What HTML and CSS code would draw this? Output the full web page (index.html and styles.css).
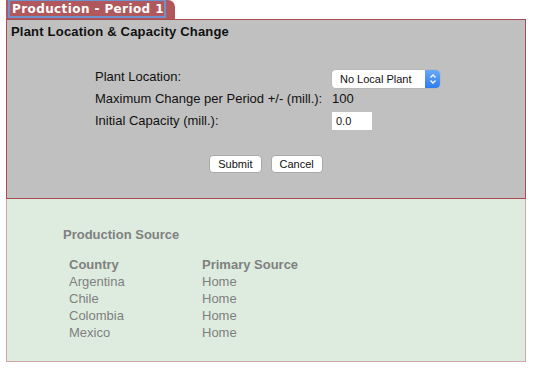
FILE: index.html
```html
<!DOCTYPE html>
<html lang="en">
<head>
    <meta charset="UTF-8">
    <title>Production - Period 1</title>
    <link rel="stylesheet" href="styles.css">
</head>
<body>
    <div class="tabs">
        <div class="tab"><span class="tab-label">Production - Period 1</span></div>
    </div>

    <div class="change-panel">
        <h2>Plant Location &amp; Capacity Change</h2>
        <div class="change-form">
            <label>Plant Location:</label>
            <div class="select">
                <span class="select-text">No Local Plant</span>
                <span class="stepper">
                    <svg width="8" height="12" viewBox="0 0 8 12">
                        <path d="M1.5 4.5 L4 2 L6.5 4.5 M1.5 7.5 L4 10 L6.5 7.5" fill="none" stroke="#fff" stroke-width="1.3"/>
                    </svg>
                </span>
            </div>

            <label>Maximum Change per Period +/- (mill.):</label>
            <span class="value">100</span>

            <label>Initial Capacity (mill.):</label>
            <input type="text" class="capacity" value="0.0">
        </div>
        <div class="buttons">
            <button>Submit</button>
            <button>Cancel</button>
        </div>
    </div>

    <div class="source-panel">
        <h3>Production Source</h3>
        <table class="source-table">
            <tr><th>Country</th><th>Primary Source</th></tr>
            <tr><td>Argentina</td><td>Home</td></tr>
            <tr><td>Chile</td><td>Home</td></tr>
            <tr><td>Colombia</td><td>Home</td></tr>
            <tr><td>Mexico</td><td>Home</td></tr>
        </table>
    </div>
</body>
</html>
```
FILE: styles.css
```css
body {
    margin: 0;
    font-family: "Liberation Sans", Arial, sans-serif;
    font-size: 13px;
    color: #111;
    background: #fff;
}

.tabs {
    padding-left: 6px;
    height: 19px;
}

.tab {
    display: inline-block;
    width: 169px;
    height: 19px;
    background: #b0585c;
    border-top-right-radius: 7px;
    box-sizing: border-box;
    padding: 0 9px 1px 2px;
}

.tab-label {
    display: block;
    height: 18px;
    border: 2px solid #6c93cf;
    border-top-width: 1px;
    box-sizing: border-box;
    padding-left: 2px;
    font-family: "DejaVu Sans", Verdana, sans-serif;
    font-weight: bold;
    font-size: 12px;
    letter-spacing: 0.4px;
    line-height: 16px;
    color: #fff;
    white-space: nowrap;
}

.change-panel {
    margin-left: 6px;
    width: 520px;
    height: 180px;
    box-sizing: border-box;
    background: #c0c0c0;
    border: 1px solid #a84c51;
    padding: 4px 4px 0;
}

.change-panel h2 {
    margin: 0;
    font-size: 13px;
    font-weight: bold;
    line-height: 16px;
    letter-spacing: 0.2px;
}

.change-form {
    display: grid;
    grid-template-columns: 237px auto;
    row-gap: 4px;
    align-items: center;
    margin: 28px 0 0 84px;
}

.change-form label,
.change-form .value {
    line-height: 18px;
}

.select {
    display: flex;
    align-items: center;
    width: 108px;
    height: 18px;
    margin: 2px 0 -2px;
    background: #fff;
    border-radius: 4px;
    box-shadow: 0 0 0 1px #b8b8b8;
    font-size: 11px;
    overflow: hidden;
}

.select-text {
    flex: 1;
    padding-left: 8px;
}

.stepper {
    width: 15px;
    height: 18px;
    display: flex;
    align-items: center;
    justify-content: center;
    background: linear-gradient(#6aa8f7, #2f7cf0);
}

.capacity {
    width: 40px;
    height: 18px;
    box-sizing: border-box;
    border: none;
    padding: 0 4px;
    font-family: inherit;
    font-size: 11px;
    color: #111;
    background: #fff;
}

.buttons {
    display: flex;
    justify-content: center;
    gap: 9px;
    margin-top: 25px;
}

.buttons button {
    height: 18px;
    padding: 0 8px;
    background: #fff;
    border: 1px solid #a9a9a9;
    border-radius: 4px;
    font-family: inherit;
    font-size: 11px;
    color: #111;
}

.source-panel {
    margin-left: 6px;
    width: 520px;
    height: 163px;
    box-sizing: border-box;
    background: #deecdf;
    border: 1px solid #d1a6a9;
    border-top: none;
    padding: 27px 0 0 56px;
    color: #808080;
}

.source-panel h3 {
    margin: 0;
    font-size: 13px;
    font-weight: bold;
    line-height: 17px;
}

.source-table {
    border-collapse: collapse;
    margin-top: 13px;
    margin-left: 3px;
}

.source-table th,
.source-table td {
    padding: 0 0 0 3px;
    text-align: left;
    font-size: 13px;
    line-height: 17px;
    width: 130px;
}

.source-table th {
    font-weight: bold;
}
```
